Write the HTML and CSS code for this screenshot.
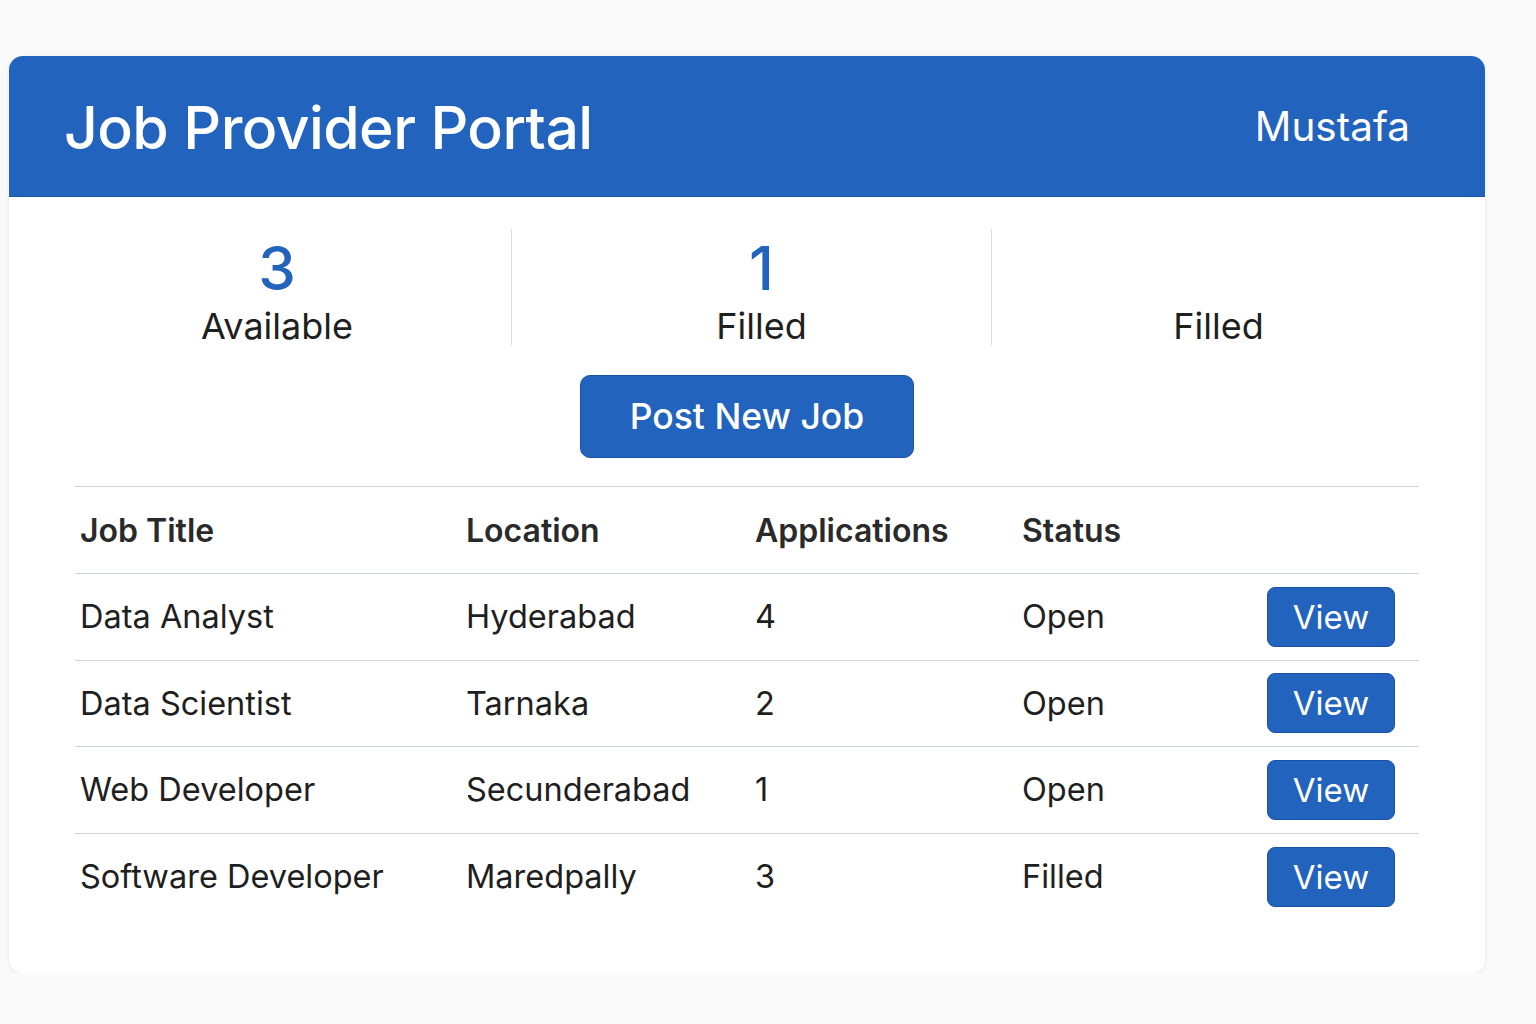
FILE: index.html
```html
<!DOCTYPE html>
<html lang="en">
<head>
<meta charset="utf-8">
<title>Job Provider Portal</title>
<link rel="stylesheet" href="styles.css">
</head>
<body>
<div class="page">
  <div class="card">
    <header class="header">
      <h1 class="title">Job Provider Portal</h1>
      <div class="user">Mustafa</div>
    </header>
    <section class="stats">
      <div class="stat">
        <div class="stat-num">3</div>
        <div class="stat-label">Available</div>
      </div>
      <div class="stat stat-mid">
        <div class="stat-num">1</div>
        <div class="stat-label">Filled</div>
      </div>
      <div class="stat">
        <div class="stat-num">&nbsp;</div>
        <div class="stat-label">Filled</div>
      </div>
    </section>
    <div class="actions">
      <button class="btn-post">Post New Job</button>
    </div>
    <table class="jobs">
      <colgroup>
        <col class="c-title"><col class="c-loc"><col class="c-app"><col class="c-status"><col class="c-act">
      </colgroup>
      <thead>
        <tr><th>Job Title</th><th>Location</th><th>Applications</th><th>Status</th><th></th></tr>
      </thead>
      <tbody>
        <tr><td>Data Analyst</td><td>Hyderabad</td><td>4</td><td>Open</td><td class="act"><button class="btn-view">View</button></td></tr>
        <tr><td>Data Scientist</td><td>Tarnaka</td><td>2</td><td>Open</td><td class="act"><button class="btn-view">View</button></td></tr>
        <tr><td>Web Developer</td><td>Secunderabad</td><td>1</td><td>Open</td><td class="act"><button class="btn-view">View</button></td></tr>
        <tr><td>Software Developer</td><td>Maredpally</td><td>3</td><td>Filled</td><td class="act"><button class="btn-view">View</button></td></tr>
      </tbody>
    </table>
  </div>
</div>
</body>
</html>
```

FILE: styles.css
```css
* { box-sizing: border-box; }
html, body { margin: 0; padding: 0; }
body {
  background: #fafafa;
  font-family: Inter, "Noto Sans", "Liberation Sans", sans-serif;
  color: #1f1f1f;
}
.page {
  padding: 56px 51px 0 9px;
}
.card {
  background: #ffffff;
  border-radius: 14px;
  box-shadow: 0 1px 4px rgba(0,0,0,0.08);
  overflow: hidden;
  padding-bottom: 53px;
  width: 1476px;
}
.header {
  background: #2263bd;
  height: 141px;
  display: flex;
  align-items: center;
  justify-content: space-between;
  padding: 2px 75px 0 55px;
  border-bottom: 1px solid #1a55ad;
}
.title {
  margin: 0;
  color: #fff;
  font-size: 59px;
  font-weight: 500;
  letter-spacing: -0.6px;
  line-height: 1;
}
.user {
  color: #fff;
  font-size: 40.5px;
  font-weight: 400;
  line-height: 1;
}
.stats {
  display: grid;
  grid-template-columns: 468px 480px 454px;
  margin: 32px 0 0 34px;
}
.stat {
  display: flex;
  flex-direction: column;
  align-items: center;
  height: 116px;
  padding-top: 10px;
}
.stat + .stat { border-left: 1px solid #dedede; }
.stat-mid { padding-left: 20px; }
.stat-num {
  color: #2263bd;
  font-size: 60px;
  font-weight: 500;
  line-height: 58px;
}
.stat-label {
  margin-top: 6px;
  font-size: 36px;
  line-height: 46px;
  color: #1f1f1f;
}
.actions {
  display: flex;
  justify-content: center;
  margin-top: 30px;
}
.btn-post {
  width: 334px;
  height: 83px;
  background: #2263bd;
  border: 1.5px solid #1a52a8;
  border-radius: 10px;
  color: #fff;
  font-family: inherit;
  font-size: 35.5px;
  font-weight: 500;
}
.jobs {
  margin: 28px 66px 0 66px;
  width: 1344px;
  border-collapse: collapse;
  table-layout: fixed;
  border-top: 1px solid #ccd3da;
}
.c-title { width: 386px; }
.c-loc { width: 289px; }
.c-app { width: 267px; }
.c-status { width: 227px; }
.jobs th, .jobs td {
  text-align: left;
  padding: 0 0 0 5px;
  height: 86.5px;
  font-size: 32.5px;
  color: #1f1f1f;
}
.jobs th {
  font-weight: 600;
  font-size: 32px;
  height: 87px;
  color: #2a2a2a;
}
.jobs td { font-weight: 400; }
.jobs thead tr, .jobs tbody tr:not(:last-child) { border-bottom: 1px solid #ccd3da; }
.jobs td.act { text-align: right; padding-right: 24px; }
.btn-view {
  width: 128px;
  height: 60px;
  background: #2263bd;
  border: 1.5px solid #1a52a8;
  border-radius: 8px;
  color: #fff;
  font-family: inherit;
  font-size: 33px;
  font-weight: 400;
  vertical-align: middle;
}
```
